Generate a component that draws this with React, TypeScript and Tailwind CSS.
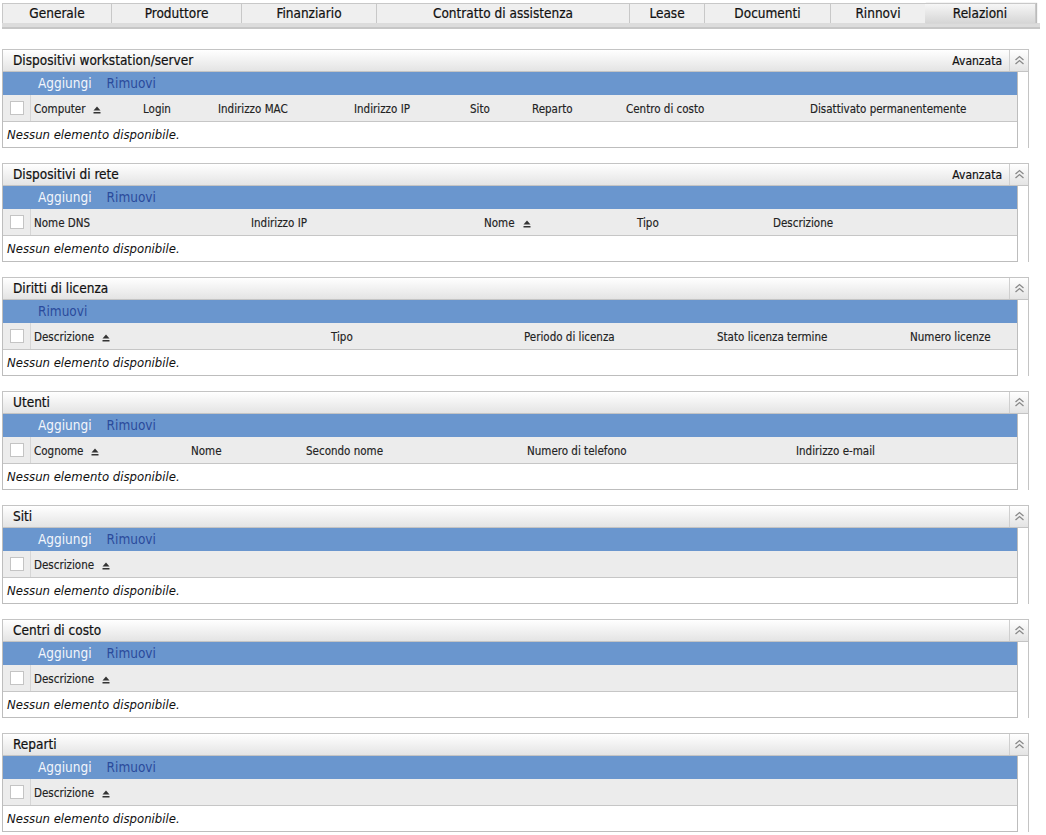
import React from "react";

type Col = { label: string; w: string; sort?: boolean };
type Panel = { title: string; advanced?: boolean; add?: boolean; cols: Col[] };

const tabs = [
  { label: "Generale", w: "w-[109px]" },
  { label: "Produttore", w: "w-[130px]" },
  { label: "Finanziario", w: "w-[135px]" },
  { label: "Contratto di assistenza", w: "w-[253px]" },
  { label: "Lease", w: "w-[75px]" },
  { label: "Documenti", w: "w-[126px]" },
  { label: "Rinnovi", w: "w-[95px]" },
  { label: "Relazioni", w: "w-[111px]", active: true },
];

const panels: Panel[] = [
  {
    title: "Dispositivi workstation/server",
    advanced: true,
    add: true,
    cols: [
      { label: "Computer", w: "w-[109px]", sort: true },
      { label: "Login", w: "w-[75px]" },
      { label: "Indirizzo MAC", w: "w-[136px]" },
      { label: "Indirizzo IP", w: "w-[116px]" },
      { label: "Sito", w: "w-[62px]" },
      { label: "Reparto", w: "w-[94px]" },
      { label: "Centro di costo", w: "w-[184px]" },
      { label: "Disattivato permanentemente", w: "flex-1" },
    ],
  },
  {
    title: "Dispositivi di rete",
    advanced: true,
    add: true,
    cols: [
      { label: "Nome DNS", w: "w-[217px]" },
      { label: "Indirizzo IP", w: "w-[233px]" },
      { label: "Nome", w: "w-[153px]", sort: true },
      { label: "Tipo", w: "w-[136px]" },
      { label: "Descrizione", w: "flex-1" },
    ],
  },
  {
    title: "Diritti di licenza",
    cols: [
      { label: "Descrizione", w: "w-[297px]", sort: true },
      { label: "Tipo", w: "w-[193px]" },
      { label: "Periodo di licenza", w: "w-[193px]" },
      { label: "Stato licenza termine", w: "w-[193px]" },
      { label: "Numero licenze", w: "flex-1" },
    ],
  },
  {
    title: "Utenti",
    add: true,
    cols: [
      { label: "Cognome", w: "w-[157px]", sort: true },
      { label: "Nome", w: "w-[115px]" },
      { label: "Secondo nome", w: "w-[221px]" },
      { label: "Numero di telefono", w: "w-[269px]" },
      { label: "Indirizzo e-mail", w: "flex-1" },
    ],
  },
  { title: "Siti", add: true, cols: [{ label: "Descrizione", w: "flex-1", sort: true }] },
  { title: "Centri di costo", add: true, cols: [{ label: "Descrizione", w: "flex-1", sort: true }] },
  { title: "Reparti", add: true, cols: [{ label: "Descrizione", w: "flex-1", sort: true }] },
];

function SortIcon() {
  return (
    <svg width="8" height="8" viewBox="0 0 8 8" className="ml-[8px] shrink-0">
      <path d="M4 0.5 L7.5 4.5 L0.5 4.5 Z" fill="#333" />
      <rect x="0.5" y="6" width="7" height="1.5" fill="#333" />
    </svg>
  );
}

function CollapseIcon() {
  return (
    <svg width="11" height="11" viewBox="0 0 11 11">
      <path d="M1.5 5 L5.5 1.5 L9.5 5" fill="none" stroke="#8a8a8a" strokeWidth="1.3" />
      <path d="M1.5 9 L5.5 5.5 L9.5 9" fill="none" stroke="#8a8a8a" strokeWidth="1.3" />
    </svg>
  );
}

function RelationPanel({ panel }: { panel: Panel }) {
  return (
    <section className="w-[1027px]">
      <div className="flex h-[23px] items-stretch border border-[#c4c4c4] bg-gradient-to-b from-[#ffffff] to-[#e4e4e4]">
        <h2 className="flex flex-1 items-center pl-[10px] text-[13.5px] text-[#111] [-webkit-text-stroke:0.2px_#111]">
          {panel.title}
        </h2>
        {panel.advanced && (
          <span className="flex items-center pr-[7px] text-[12px] text-[#111] [-webkit-text-stroke:0.2px_#111]">
            Avanzata
          </span>
        )}
        <button className="flex w-[19px] items-center justify-center border-l border-[#cfcfcf]">
          <CollapseIcon />
        </button>
      </div>
      <div className="flex">
        <div className="w-[1016px] border-x border-b border-[#bdbdbd]">
          <div className="flex h-[23px] items-center bg-[#6a96ce] text-[13.5px]">
            {panel.add && <span className="ml-[35px] text-[#f2f5fb]">Aggiungi</span>}
            <span className={panel.add ? "ml-[15px] text-[#2a4b9c]" : "ml-[35px] text-[#2a4b9c]"}>Rimuovi</span>
          </div>
          <div className="flex h-[27px] border-b border-[#c6c6c6] bg-[#ececec] text-[11.5px] text-[#222] [-webkit-text-stroke:0.15px_#222]">
            <div className="flex w-[28px] items-center justify-center border-r border-[#d6d6d6]">
              <span className="h-[14px] w-[14px] border border-[#c4c4c4] bg-white" />
            </div>
            {panel.cols.map((c) => (
              <div key={c.label} className={`flex items-center pl-[3px] pt-[4px] ${c.w}`}>
                <span>{c.label}</span>
                {c.sort && <SortIcon />}
              </div>
            ))}
          </div>
          <div className="flex h-[25px] items-center pl-[4px] text-[13px] italic text-[#111]">
            Nessun elemento disponibile.
          </div>
        </div>
        <div className="w-[11px] border-r border-[#c4c4c4]" />
      </div>
    </section>
  );
}

export default function App() {
  return (
    <main
      className="min-h-screen bg-white pl-[2px] pt-[3px]"
      style={{ fontFamily: '"DejaVu Sans Condensed", "DejaVu Sans", sans-serif' }}
    >
      <nav className="w-[1038px]">
        <div className="flex">
          {tabs.map((t) => (
            <div
              key={t.label}
              className={
                t.active
                  ? `flex h-[20px] items-center justify-center border-t border-r border-[#c8c8c8] bg-gradient-to-b from-[#f6f6f6] to-[#d6d6d6] text-[13.5px] text-[#111] shadow-[1px_0_1px_#bbb] [-webkit-text-stroke:0.2px_#111] ${t.w}`
                  : `flex h-[20px] items-center justify-center border-t border-l border-[#c8c8c8] bg-[#efefef] text-[13.5px] text-[#111] [-webkit-text-stroke:0.2px_#111] ${t.w}`
              }
            >
              {t.label}
            </div>
          ))}
        </div>
        <div className="h-[6px] border-b-2 border-[#c6c6c6] bg-[#dcdcdc]" />
      </nav>
      <div className="mt-[20px] flex flex-col gap-[15px]">
        {panels.map((p) => (
          <RelationPanel key={p.title} panel={p} />
        ))}
      </div>
    </main>
  );
}
